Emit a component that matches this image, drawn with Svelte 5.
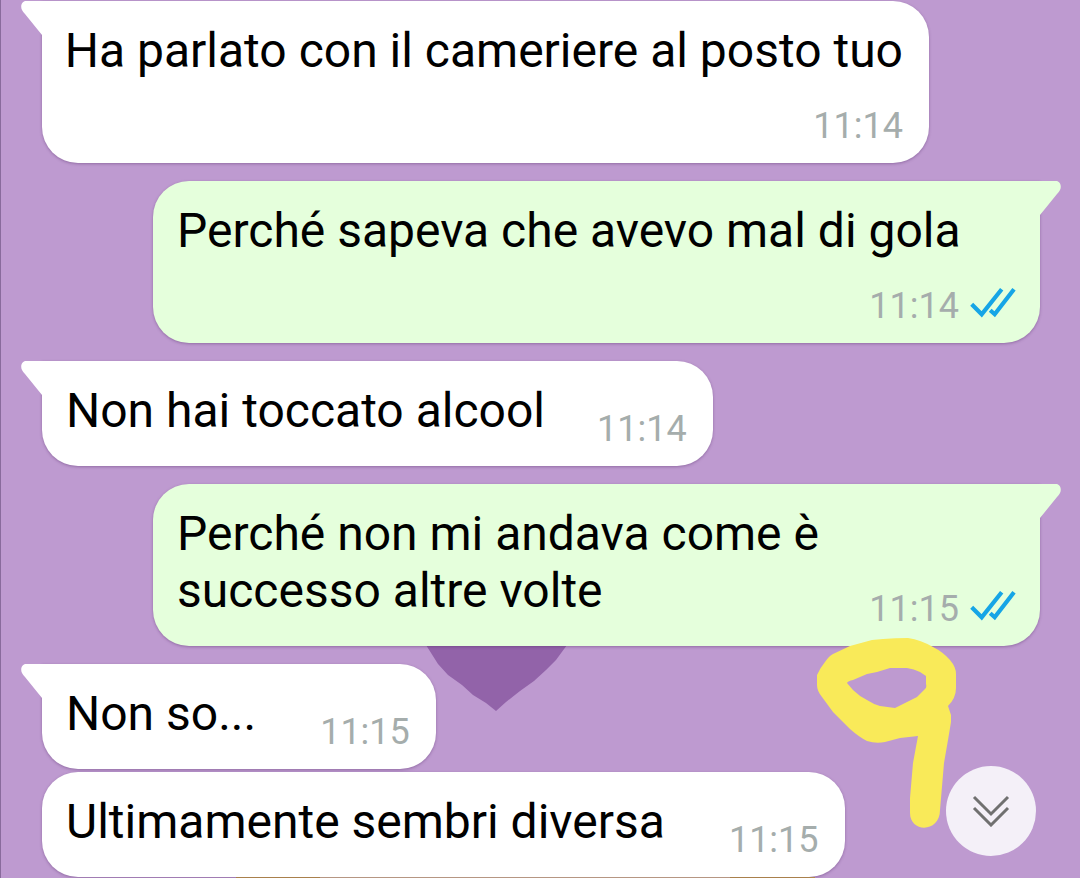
<script>
  const groups = [
    [{ text: 'Ha parlato con il cameriere al posto tuo', time: '11:14', stacked: true }],
    [{ text: 'Perché sapeva che avevo mal di gola', time: '11:14', sent: true, stacked: true }],
    [{ text: 'Non hai toccato alcool', time: '11:14', close: true }],
    [{ text: 'Perché non mi andava come è successo altre volte', time: '11:15', sent: true, tight: true }],
    [
      { text: 'Non so...', time: '11:15' },
      { text: 'Ultimamente sembri diversa', time: '11:15' }
    ]
  ];
</script>

<main>
  <svg class="wallpaper" width="1080" height="878" viewBox="0 0 1080 878" aria-hidden="true">
    <path d="M496 711L486 703L473 695L462 685L448 675L438 664L426 645C412 620 416 584 446 578C470 574 488 588 496 602C504 588 522 574 546 578C578 584 580 620 567 645L556 660L546 670L534 681L520 691L506 702Z" fill="#9263a9" />
    <path d="M236 877H320V878H236ZM730 877H815V878H730Z" fill="#c9a045" />
    <path d="M320 877H730V878H320Z" fill="#dbbd90" />
  </svg>

  <div class="chat">
    {#each groups as group}
      <div class="group">
        {#each group as message, i}
          <article
            class="bubble"
            class:sent={message.sent}
            class:stacked={message.stacked}
            class:close={message.close}
            class:tight={message.tight}
            class:first={i === 0}
          >
            {#if i === 0}
              <svg class="tail" width="24" height="36" viewBox="0 0 24 36" aria-hidden="true">
                <path d="M24 0H5C1 0 -1 5 1 9Q2 11 4 13L21 34V36H24Z" fill="currentColor" />
              </svg>
            {/if}
            <p>{message.text}</p>
            <div class="meta">
              <time>{message.time}</time>
              {#if message.sent}
                <svg width="46" height="30" viewBox="0 0 46 30" role="img" aria-label="Letto">
                  <path d="M1.7 16.3L11.7 26.3L31.7 1.3M20.2 22.3L24.7 26.3L44 1.3" fill="none" stroke="#16a5e6" stroke-width="4.2" />
                </svg>
              {/if}
            </div>
          </article>
        {/each}
      </div>
    {/each}
  </div>

  <svg class="doodle" width="140" height="192" viewBox="0 0 140 192" aria-hidden="true">
    <path
      fill-rule="evenodd"
      d="M66 1Q78 0 91 0Q104 2 116 9Q126 14 133 22Q139 29 139 36V50Q139 60 131 68L134 77V84L131 102L127 125L123 172C123 195 93 195 93 175V160L96 125L101 98L83 100L68 104Q59 106 50 103Q42 99 33 91L16 74L5 59Q0 53 0 47V37Q3 30 8 24Q12 18 16 16L33 8L55 2ZM30 45L36 52Q42 58 50 62Q56 66 63 68L78 70L90 64L100 59L108 51Q110 49 109 46V38L103 34Q97 31 90 30H73L60 34L50 36L36 42Q31 43 30 45Z"
      fill="#f9ea59"
    />
  </svg>

  <button class="down" aria-label="Vai in fondo">
    <svg width="38" height="32" viewBox="0 0 38 32" aria-hidden="true">
      <path d="M2 2L19 19L36 2M2 13L19 30L36 13" fill="none" stroke="#707070" stroke-width="3" />
    </svg>
  </button>
</main>

<style>
  :global(body) {
    margin: 0;
    background: #be9ad0;
  }
  main {
    position: relative;
    min-height: 100vh;
    box-sizing: border-box;
    overflow: hidden;
    border-left: 1px solid #896b9c;
    background: #be9ad0;
    font-family: Roboto, sans-serif;
    color: #000;
  }
  .wallpaper {
    position: absolute;
    top: 0;
    left: -1px;
  }
  .chat {
    position: relative;
    display: flex;
    flex-direction: column;
    gap: 18px;
    padding: 1px 40px 1px 41px;
  }
  .group {
    display: flex;
    flex-direction: column;
    align-items: flex-start;
    gap: 3px;
  }
  .bubble {
    position: relative;
    box-sizing: border-box;
    max-width: 887px;
    display: flex;
    align-items: flex-end;
    justify-content: space-between;
    column-gap: 64px;
    row-gap: 15px;
    padding: 21px 26px 16px 24px;
    border-radius: 36px;
    background: #fff;
    color: #fff;
    box-shadow: 0 1px 3px rgba(80, 40, 100, 0.4);
  }
  .first {
    border-top-left-radius: 0;
  }
  .sent {
    align-self: flex-end;
    border-radius: 36px 0 36px 36px;
    background: #e5ffdc;
    color: #e5ffdc;
    padding-right: 24px;
  }
  .stacked {
    flex-wrap: wrap;
    justify-content: flex-end;
  }
  .stacked p {
    flex: 1 0 100%;
    white-space: nowrap;
  }
  .close {
    column-gap: 52px;
  }
  .tight {
    column-gap: 24px;
  }
  .tail {
    position: absolute;
    top: 0;
    left: -21px;
  }
  .sent .tail {
    left: auto;
    right: -21px;
    transform: scaleX(-1);
  }
  p {
    margin: 0;
    padding-bottom: 11px;
    font-size: 48px;
    line-height: 57px;
    color: #000;
  }
  .meta {
    display: flex;
    align-items: center;
    gap: 11px;
    font-size: 36px;
    line-height: 42px;
    color: #a5adac;
  }
  .meta svg {
    margin-bottom: 6px;
  }
  .doodle {
    position: absolute;
    top: 638px;
    right: 123px;
  }
  .down {
    position: absolute;
    right: 44px;
    bottom: 22px;
    width: 90px;
    height: 90px;
    display: grid;
    place-items: center;
    padding: 0;
    border: 0;
    border-radius: 50%;
    background: #f4f0f8;
  }
</style>
